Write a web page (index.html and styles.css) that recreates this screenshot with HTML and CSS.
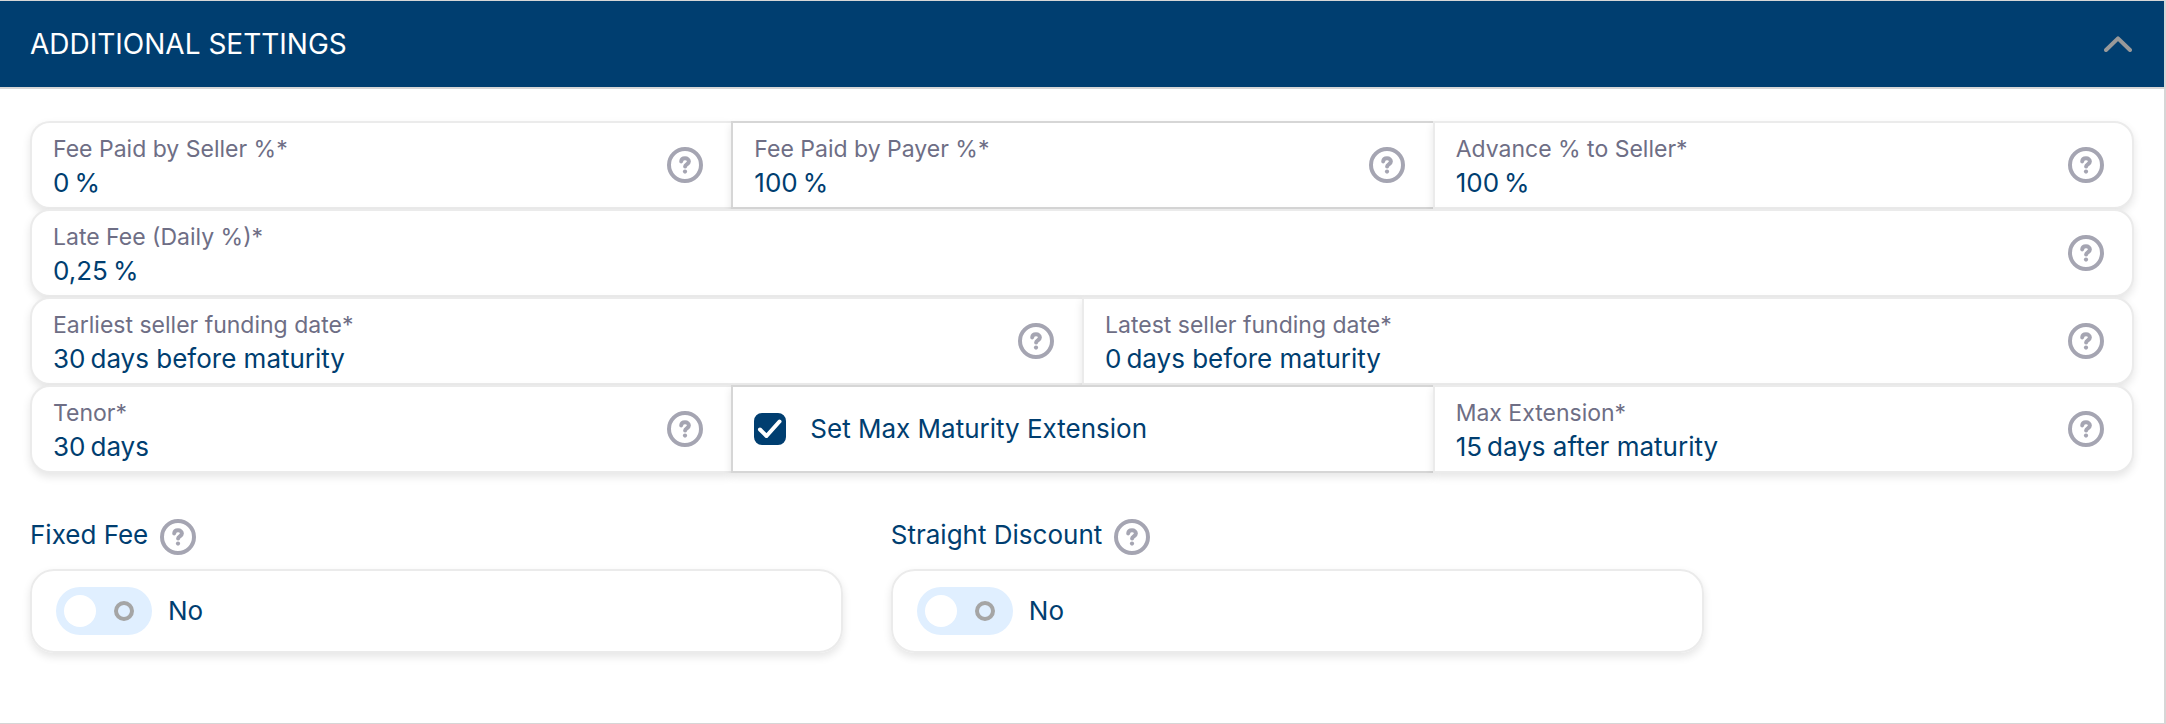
FILE: index.html
```
<!DOCTYPE html>
<html lang="en">
<head>
    <meta charset="UTF-8">
    <meta name="viewport" content="width=device-width, initial-scale=1.0">
    <title>Additional Settings</title>
    <link rel="stylesheet" href="styles.css">
</head>
<body>
    <!-- Shared icon -->
    <svg class="sprite" aria-hidden="true">
        <symbol id="help" viewBox="0 0 36 36">
            <circle cx="18" cy="18" r="16" fill="none" stroke="currentColor" stroke-width="4"/>
            <path d="M14.2 14.4C14.4 12.4 16 11.2 18 11.2C20.2 11.2 21.9 12.6 21.9 14.6C21.9 17.4 18.1 17 18.1 19.6" fill="none" stroke="currentColor" stroke-width="4" stroke-linecap="round"/>
            <circle cx="18" cy="24.6" r="2.1" fill="currentColor"/>
        </symbol>
    </svg>

    <section class="panel">
        <button class="panel-header" type="button" aria-expanded="true">
            <span>ADDITIONAL SETTINGS</span>
            <svg class="chevron" viewBox="0 0 28 16"><path d="M2 14L14 2.4L26 14"/></svg>
        </button>

        <form class="panel-body">
            <div class="fields">
                <div class="row">
                    <div class="field">
                        <div class="field-text">
                            <label for="feeSeller">Fee Paid by Seller %*</label>
                            <div class="value"><input id="feeSeller" type="text" size="1" value="0"><span>%</span></div>
                        </div>
                        <button class="help" type="button" aria-label="Help"><svg><use href="#help"/></svg></button>
                    </div>
                    <div class="field outlined">
                        <div class="field-text">
                            <label for="feePayer">Fee Paid by Payer %*</label>
                            <div class="value"><input id="feePayer" type="text" size="3" value="100"><span>%</span></div>
                        </div>
                        <button class="help" type="button" aria-label="Help"><svg><use href="#help"/></svg></button>
                    </div>
                    <div class="field">
                        <div class="field-text">
                            <label for="advance">Advance % to Seller*</label>
                            <div class="value"><input id="advance" type="text" size="3" value="100"><span>%</span></div>
                        </div>
                        <button class="help" type="button" aria-label="Help"><svg><use href="#help"/></svg></button>
                    </div>
                </div>

                <div class="row">
                    <div class="field">
                        <div class="field-text">
                            <label for="lateFee">Late Fee (Daily %)*</label>
                            <div class="value"><input id="lateFee" type="text" size="4" value="0,25"><span>%</span></div>
                        </div>
                        <button class="help" type="button" aria-label="Help"><svg><use href="#help"/></svg></button>
                    </div>
                </div>

                <div class="row">
                    <div class="field">
                        <div class="field-text">
                            <label for="earliest">Earliest seller funding date*</label>
                            <div class="value"><input id="earliest" type="text" size="2" value="30"><span>days before maturity</span></div>
                        </div>
                        <button class="help" type="button" aria-label="Help"><svg><use href="#help"/></svg></button>
                    </div>
                    <div class="field">
                        <div class="field-text">
                            <label for="latest">Latest seller funding date*</label>
                            <div class="value"><input id="latest" type="text" size="1" value="0"><span>days before maturity</span></div>
                        </div>
                        <button class="help" type="button" aria-label="Help"><svg><use href="#help"/></svg></button>
                    </div>
                </div>

                <div class="row">
                    <div class="field">
                        <div class="field-text">
                            <label for="tenor">Tenor*</label>
                            <div class="value"><input id="tenor" type="text" size="2" value="30"><span>days</span></div>
                        </div>
                        <button class="help" type="button" aria-label="Help"><svg><use href="#help"/></svg></button>
                    </div>
                    <label class="field outlined check-field">
                        <span class="checkbox">
                            <input type="checkbox" checked>
                            <svg viewBox="0 0 32 32"><path d="M6 16.5L12.5 23L25.5 8.5"/></svg>
                        </span>
                        <span>Set Max Maturity Extension</span>
                    </label>
                    <div class="field">
                        <div class="field-text">
                            <label for="maxExtension">Max Extension*</label>
                            <div class="value"><input id="maxExtension" type="text" size="2" value="15"><span>days after maturity</span></div>
                        </div>
                        <button class="help" type="button" aria-label="Help"><svg><use href="#help"/></svg></button>
                    </div>
                </div>
            </div>

            <div class="switches">
                <div class="switch-group">
                    <div class="switch-title">
                        <label for="fixedFee">Fixed Fee</label>
                        <button class="help" type="button" aria-label="Help"><svg><use href="#help"/></svg></button>
                    </div>
                    <div class="switch-card">
                        <input class="switch" id="fixedFee" type="checkbox" role="switch">
                        <span>No</span>
                    </div>
                </div>
                <div class="switch-group">
                    <div class="switch-title">
                        <label for="straightDiscount">Straight Discount</label>
                        <button class="help" type="button" aria-label="Help"><svg><use href="#help"/></svg></button>
                    </div>
                    <div class="switch-card">
                        <input class="switch" id="straightDiscount" type="checkbox" role="switch">
                        <span>No</span>
                    </div>
                </div>
            </div>
        </form>
    </section>
</body>
</html>
```

FILE: styles.css
```
:root {
    --navy: #003e70;
    --label: #6e6e85;
    --icon: #a5a5b2;
    --line: #ebebeb;
    --line-dark: #d6d6d6;
}

* {
    box-sizing: border-box;
}

body {
    margin: 0;
    background: white;
    color: var(--navy);
    font-family: Inter, sans-serif;
    font-size: 26px;
    line-height: 32px;
}

button, input {
    font: inherit;
    color: inherit;
}

.sprite {
    display: none;
}

.panel {
    min-height: 100vh;
    border: solid var(--line-dark);
    border-width: 1px 2px 1px 0;
}

.panel-header {
    display: flex;
    justify-content: space-between;
    align-items: center;
    width: 100%;
    padding: 24px 32px 24px 30px;
    border: none;
    border-bottom: 2px solid var(--line-dark);
    background: var(--navy);
    color: white;
    font-size: 28px;
    line-height: 38px;
    cursor: pointer;
}

.chevron {
    width: 28px;
    height: 16px;
    fill: none;
    stroke: #999;
    stroke-width: 4;
    stroke-linecap: round;
    stroke-linejoin: round;
}

.panel-body {
    padding: 32px 30px;
}

.row {
    display: grid;
    grid-auto-flow: column;
    grid-auto-columns: minmax(0, 1fr);
}

.field {
    display: flex;
    justify-content: space-between;
    align-items: center;
    height: 88px;
    padding: 0 28px 0 21px;
    border: 2px solid var(--line);
    border-right: none;
    background: white;
    box-shadow: 0 4px 8px rgba(0, 0, 0, 0.1);
}

.field:first-child {
    border-radius: 20px 0 0 20px;
}

.field:last-child {
    border-right: 2px solid var(--line);
    border-radius: 0 20px 20px 0;
}

.field:only-child {
    border-radius: 20px;
}

.field.outlined {
    border-color: var(--line-dark);
}

.field-text {
    padding-top: 2px;
}

.field-text label {
    display: block;
    margin-bottom: 2px;
    color: var(--label);
    font-size: 23px;
}

.value {
    display: flex;
    align-items: baseline;
    gap: 5px;
}

.value input {
    field-sizing: content;
    padding: 0;
    border: none;
    outline: none;
    background: none;
}

.help {
    display: flex;
    padding: 0;
    border: none;
    background: none;
    color: var(--icon);
    cursor: pointer;
}

.help svg {
    width: 36px;
    height: 36px;
}

.check-field {
    justify-content: flex-start;
    gap: 24px;
}

.checkbox {
    display: grid;
}

.checkbox input, .checkbox svg {
    grid-area: 1 / 1;
    width: 32px;
    height: 32px;
    margin: 0;
}

.checkbox input {
    appearance: none;
    border: 2px solid var(--navy);
    border-radius: 8px;
}

.checkbox input:checked {
    background: var(--navy);
}

.checkbox svg {
    fill: none;
    stroke: white;
    stroke-width: 4;
    stroke-linecap: round;
    stroke-linejoin: round;
    pointer-events: none;
}

.switches {
    display: flex;
    margin: 44px -48px 0 0;
}

.switch-group {
    width: 40%;
    padding-right: 48px;
}

.switch-title {
    display: flex;
    align-items: center;
    gap: 12px;
    height: 40px;
    margin-bottom: 12px;
}

.switch-title label {
    padding-bottom: 4px;
}

.switch-card {
    display: flex;
    align-items: center;
    gap: 16px;
    height: 84px;
    padding: 0 24px;
    border: 2px solid var(--line);
    border-radius: 24px;
    box-shadow: 0 4px 8px rgba(0, 0, 0, 0.1);
}

.switch {
    appearance: none;
    display: flex;
    justify-content: space-between;
    align-items: center;
    width: 96px;
    height: 48px;
    margin: 0;
    padding: 0 18px 0 8px;
    border-radius: 24px;
    background: #e0efff;
    cursor: pointer;
}

.switch::before {
    content: "";
    width: 32px;
    height: 32px;
    border-radius: 50%;
    background: white;
}

.switch::after {
    content: "";
    box-sizing: border-box;
    width: 20px;
    height: 20px;
    border: 4px solid #a5a5a5;
    border-radius: 50%;
}
```
